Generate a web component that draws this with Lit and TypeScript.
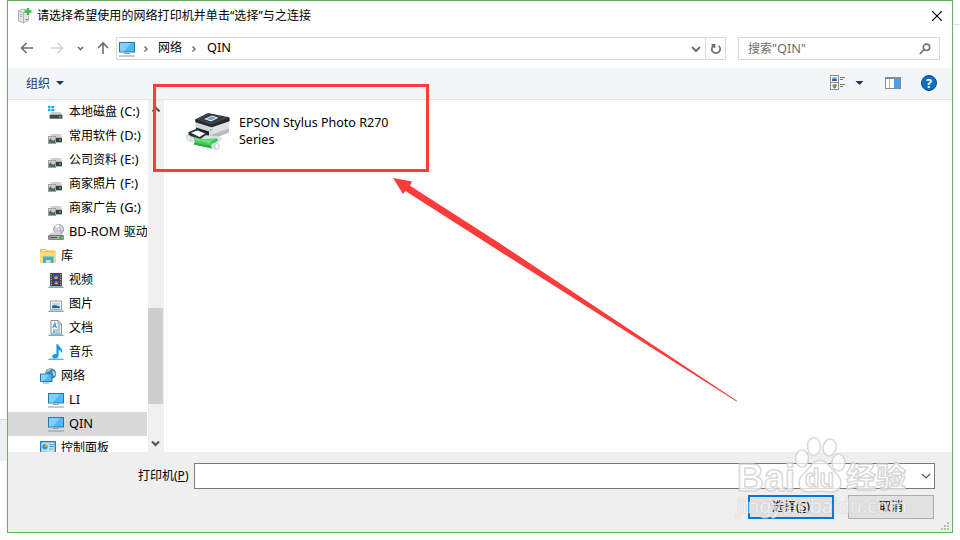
import { LitElement, html, css, svg, TemplateResult } from "lit";
import { customElement, property } from "lit/decorators.js";

const monitor = svg`
  <rect x=".5" y="1.500" width="15" height="9.500" fill="#4db8fb" stroke="#2a78a8"/>
  <path d="M1 2h11L5 10.500H1z" fill="#83cffc"/>
  <path d="M5 12.500h6" stroke="#93a9b8" /><path d="M0 15h16" stroke="#8297ad"/>`;

const drive = svg`
  <path d="M3 6h10l1 3H2z" fill="#cfd0d1"/><path d="M2 9h12v6H7V9z" fill="#b8babb"/>
  <rect x="7.5" y="10" width="6.5" height="4" fill="#3a3e3f"/><rect x="11" y="11.2" width="2" height="1.5" fill="#32d05a"/>
  <rect x=".5" y="8.5" width="7" height="7" fill="#c3d9e4" stroke="#a0a0a0"/>
  <path d="M1 15v-3l2-2 2 3 2-2v4z" fill="#456a72"/><circle cx="4" cy="10.6" r="1.3" fill="#e3b48a"/>`;

const base = svg`<path d="M1 14.5h14l1 1.5H0z" fill="#4fb9f2"/><path d="M2 14h12v.8H2z" fill="#b5e3fb"/>`;

const icons: Record<string, TemplateResult<2>> = {
  monitor,
  drive,
  system: svg`
    <path d="M0 0h2.5v2.2H0zM3.3 0h2.9v2.2H3.3zM0 3h2.5v2.3H0zM3.3 3h2.9v2.3H3.3z" transform="translate(0 2)" fill="#12aef0"/>
    <path d="M3 8h10l1.400 3H1.600z" fill="#cfd0d1"/><rect x="1.600" y="10.700" width="12.800" height="4" fill="#46494b"/>
    <rect x="11" y="12" width="2" height="1.500" fill="#36d55c"/>`,
  disc: svg`
    <circle cx="10.6" cy="5.4" r="5" fill="#cfd2da" stroke="#8f9198" stroke-width=".8"/>
    <path d="M10.6 5.4L7 2a5 5 0 0 1 4-1.5z" fill="#fff"/><path d="M10.6 5.4l4.400 1a5 5 0 0 1-2 3z" fill="#b3aad8"/>
    <circle cx="10.6" cy="5.4" r="1.5" fill="#fff" stroke="#888" stroke-width=".6"/>
    <path d="M3 8.500h5l2 1.500h4l1.500 2H.5z" fill="#d6d7d8"/><rect x=".6" y="11.400" width="14.800" height="4.200" rx=".5" fill="#a6a8a9" stroke="#5f6162" stroke-width=".8"/>
    <path d="M2 13.500h7" stroke="#555"/><rect x="11.500" y="12" width="2.600" height="3" fill="#31b92f"/>`,
  library: svg`
    <path d="M0 1.500Q0 1 .5 1H6l1.500 1.500H15.500v12H0z" fill="#efbd43"/><path d="M1.500 2h4.500v1.300H1.500z" fill="#fff1bd"/>
    <path d="M0 4.200h16v10.300H0z" fill="#fbd97c"/>
    <path d="M3 8.500h10.500V15H10.700v-3H5.800v3H3z" fill="#26b5ea"/>`,
  video: svg`${base}
    <rect x="2" y="1" width="12" height="13.300" fill="#3c3d42"/><path d="M3.300 2v12M12.700 2v12" stroke="#d3d3d3" stroke-width="1.100" stroke-dasharray="1.300 1.200"/>
    <rect x="5" y="2" width="6" height="5" fill="#3358b4"/><rect x="5" y="8" width="6" height="5" fill="#263e96"/>
    <path d="M6 6l2-2 2 1.500V7H6zM6 12l2-3 2 2v1.500z" fill="#e69a35"/><path d="M8 3h2v1.500zM9 9h1.500v2z" fill="#c63f36"/>`,
  picture: svg`${base}
    <rect x="2.500" y="5" width="11" height="8.700" fill="#fff" stroke="#9a9a9a"/><rect x="4" y="6.500" width="8" height="5.700" fill="#b5dcf3"/>
    <path d="M4 9.800l3-.8 5 1.800v1.400H4z" fill="#2f668c"/>`,
  document: svg`${base}
    <path d="M3 .6h7.200l3.200 3.200V14H3z" fill="#fff" stroke="#777" stroke-width=".9"/><path d="M10 .8V4h3.200" fill="none" stroke="#777" stroke-width=".8"/>
    <path d="M4.800 8L6.800 3l1.500 5M5.400 6.500h3" fill="none" stroke="#299bd6" stroke-width="1.100"/>
    <path d="M9.500 6h2.500M9.500 8h2.500M5 10h7M8 12h4" stroke="#4787b2" stroke-width=".9"/><rect x="5" y="11" width="2.300" height="2" fill="#3faee8"/>`,
  music: svg`${base}
    <path d="M8.400 .2h1.900c0 2.500 5.400 3.700 3.500 9.200-.3-2-1.800-3.200-3.200-3.400V11.500c0 3.600-6.400 4.100-6.400 1 0-2.100 2.300-3 4.200-2.400z" fill="#149be2"/>`,
  network: svg`
    <circle cx="10.600" cy="5.700" r="5.500" fill="#4a86a8"/><path d="M6.500 3.500Q8 .8 11 .8q-.5 2-2.500 2.500T6 6zM12.500 3q2 .3 3 2.500-.5 2-2 2.500-.5-2-1-2z" fill="#bcd9e6"/>
    <rect x=".5" y="6" width="11.500" height="7.500" fill="#4db8fb" stroke="#2a78a8"/><path d="M1 6.500h8L4 13H1z" fill="#83cffc"/><path d="M3 15h6" stroke="#8297ad"/>`,
  panel: svg`
    <rect x=".7" y="1.700" width="14.600" height="12" fill="#b9e6fb" stroke="#2387bf" stroke-width="1.400"/><circle cx="5" cy="6.700" r="2.700" fill="#2b96d8"/>
    <path d="M5 6.700V4a2.700 2.700 0 0 1 2.700 2.700z" fill="#f6a82d"/><path d="M9.500 4.500h2M12.500 4.500h1.500M9.500 6.500h4M9.500 9h1.500" stroke="#2b86bb"/><path d="M11.500 9h2" stroke="#f3a22b"/>
    <path d="M2.500 11.500h3" stroke="#f3a22b"/>`,
  server: svg`
    <path d="M1.500 3l4-2 6 1.500v10L6.500 15l-5-2z" fill="#e4e5e4" stroke="#a0a2a1" stroke-width=".8"/><path d="M6.500 4.500V15M1.500 3l5 1.500 5-2" fill="none" stroke="#a6a8a7" stroke-width=".8"/>
    <path d="M2.700 6l2.500.8M2.700 8l2.500.8" stroke="#9b9b9b" stroke-width=".8"/><path d="M8.500 11.500h2" stroke="#777"/>
    <path d="M9.800 0h2.400v2.300h2.300v2.400h-2.300V7H9.800V4.700H7.500V2.300h2.300z" fill="#3fbd4a"/>`,
};

@customElement("ui-icon")
class UiIcon extends LitElement {
  static styles = css`
    :host { display: block; width: 16px; height: 16px; flex: none; }
    svg { display: block; }
  `;
  @property() name = "monitor";
  render() {
    return html`<svg width="16" height="16" viewBox="0 0 16 16">${icons[this.name]}</svg>`;
  }
}

interface TreeItem { icon: string; cjk?: string; latin?: string; level: number; selected?: boolean; latinFirst?: boolean; }
const items: TreeItem[] = [
  { icon: "system", cjk: "本地磁盘", latin: " (C:)", level: 2 },
  { icon: "drive", cjk: "常用软件", latin: " (D:)", level: 2 },
  { icon: "drive", cjk: "公司资料", latin: " (E:)", level: 2 },
  { icon: "drive", cjk: "商家照片", latin: " (F:)", level: 2 },
  { icon: "drive", cjk: "商家广告", latin: " (G:)", level: 2 },
  { icon: "disc", cjk: "驱动器", latin: "BD-ROM ", level: 2, latinFirst: true },
  { icon: "library", cjk: "库", level: 1 },
  { icon: "video", cjk: "视频", level: 2 },
  { icon: "picture", cjk: "图片", level: 2 },
  { icon: "document", cjk: "文档", level: 2 },
  { icon: "music", cjk: "音乐", level: 2 },
  { icon: "network", cjk: "网络", level: 1 },
  { icon: "monitor", latin: "LI", level: 2 },
  { icon: "monitor", latin: "QIN", level: 2, selected: true },
  { icon: "panel", cjk: "控制面板", level: 1 },
];

@customElement("folder-tree")
class FolderTree extends LitElement {
  static styles = css`
    :host { display: block; width: 139px; height: 352px; overflow: hidden; }
    .row { display: flex; align-items: center; height: 24px; gap: 5px; padding-left: 40px; white-space: pre; color: #000; }
    .top { padding-left: 32px; }
    .selected { background: #d9d9d9; }
    .latin { font-size: 12.8px; line-height: 0; }
    .label { line-height: 24px; height: 24px; }
  `;
  render() {
    return items.map((n) => {
      const latin = html`<span class="latin">${n.latin}</span>`;
      return html`<div class="row ${n.level === 1 ? "top" : ""} ${n.selected ? "selected" : ""}">
        <ui-icon name=${n.icon}></ui-icon><span class="label">${n.latinFirst ? latin : ""}${n.cjk ?? ""}${n.latin && !n.latinFirst ? latin : ""}</span></div>`;
    });
  }
}

@customElement("app-root")
class AppRoot extends LitElement {
  static styles = css`
    :host { display: block; position: relative; width: 960px; height: 540px; overflow: hidden; background: #fff;
      font: 12px/16px "Noto Sans", "Noto Sans CJK SC", sans-serif; color: #000; }
    * { box-sizing: border-box; }
    svg { display: block; flex: none; }
    .page { display: grid; grid-template-columns: 7px 946px 7px; height: 540px; }
    .left { margin-top: 419px; height: 42px; background: #efefef; border-top: 1px solid #dcdcdc; }
    .right { margin-top: 24px; height: 1px; background: #e3e3e3; }
    .window { height: 533px; border: 1px solid #62b562; display: flex; flex-direction: column; background: #fff; }
    .title { height: 30px; display: flex; align-items: center; padding: 0 10px 0 9px; }
    .title span { margin-left: 4px; flex: 1; letter-spacing: .06px; }
    .nav { height: 37px; display: flex; align-items: flex-start; padding: 6px 12px 0 11px; }
    .arrows { width: 97px; height: 23px; }
    .address { display: flex; align-items: center; width: 610px; height: 23px; border: 1px solid #d9d9d9; padding-left: 2px; }
    .crumb { line-height: 20px; height: 21px; }
    .latin { font-size: 12.8px; line-height: 0; }
    .chev { margin: 0 9px 0 8px; }
    .next { margin: 0 10px 0 9px; }
    .refresh { display: flex; align-items: center; justify-content: center; width: 20px; height: 21px; border-left: 1px solid #d9d9d9; }
    .grow { flex: 1; }
    .search { display: flex; align-items: center; justify-content: space-between; margin-left: 12px; width: 202px; height: 23px; border: 1px solid #d9d9d9; padding: 0 8px 0 9px; color: #6d6d6d; }
    .toolbar { height: 32px; display: flex; align-items: center; background: #f4f5f7; border-bottom: 1px solid #e4e7ea; padding: 0 15px 1px 18px; color: #1e395b; }
    .organize { padding-top: 2px; }
    .caret { width: 0; margin-left: 6px; border: 4px solid transparent; border-top-color: #1b365d; border-bottom: 0; }
    .views { margin-right: 7px; }
    .main { display: flex; height: 352px; }
    .scroll { display: flex; flex-direction: column; align-items: center; margin-left: 1px; width: 16px; height: 352px; background: #f0f0f0; padding: 6px 0 4px; }
    .thumb { width: 15px; height: 96px; background: #cdcdcd; margin: 194px 1px 36px 0; }
    .files { flex: 1; margin-left: 2px; border-left: 1px solid #f7f7f7; padding: 13px 0 0 19px; display: flex; }
    .file { margin: 1px 0 0 7px; font-size: 12.5px; line-height: 17px; letter-spacing: .01px; width: 160px; white-space: nowrap; }
    .footer { flex: 1; background: #efefef; padding: 11px 17px 0 130px; }
    .field { display: flex; align-items: center; justify-content: space-between; }
    .combo { display: flex; align-items: center; justify-content: flex-end; width: 741px; height: 26px; border: 1px solid #7a7a7a; background: #fff; padding-right: 3px; }
    .buttons { display: flex; justify-content: flex-end; gap: 14px; margin: 6px 1px 0 0; }
    .btn { width: 86px; height: 24px; display: flex; align-items: center; justify-content: center; border: 1px solid #adadad; background: #e1e1e1; }
    .primary { border: 2px solid #0078d7; }
    .overlay { position: absolute; left: 0; top: 0; }
    .bold { font-family: "Liberation Sans", "Noto Sans CJK SC", sans-serif; font-weight: 700; }
    .url { font-family: "Noto Sans", sans-serif; font-size: 20px; }
  `;

  chevron(cls = "") {
    return html`<svg class="chev ${cls}" width="6" height="8" viewBox="0 0 6 8"><path d="M1.500 1.500L4 4 1.500 6.500" fill="none" stroke="#757575" stroke-width="1.500"/></svg>`;
  }

  printer() {
    return html`<svg width="46" height="40" viewBox="0 0 46 40">
      <path d="M9.500 7L25 12.500V25L9.500 21z" fill="#d5d8da"/>
      <path d="M24.500 12.500L43 7v12.500L24.500 27z" fill="#b9bcbf"/><path d="M24.500 13.500L43 8v7.500l-18.500 6.500z" fill="#dfe1e4"/>
      <path d="M9 6.500L21 .5q1-.4 2-.2l20 4q1 .4 .5 4L26 14.300l-1.500-.2L9.500 9.200z" fill="#25292c"/>
      <path d="M10 6.300L21 1l21 3.800L25.500 11.500z" fill="#464b4f"/><path d="M13 6.200l9-4.400L38 5l-12 5z" fill="#33383b"/>
      <path d="M18 5.900l8-3.400 6.500 2.200-7.500 3.800z" fill="#dff1fb"/><path d="M20.500 5.800l5.500-2.300 4 1.300-5 2.500z" fill="#5aa6e2"/>
      <path d="M10 14.500l13 4v6l-13-4z" fill="#1f2325"/>
      <path d="M0 22q1-2 4-1.500l29 3q4 0 3 3l-3 3-27 0Q1 29 0 22z" fill="#dfe3e3"/>
      <path d="M2.500 19L10 16l12 4.500-7.500 5.500-12-3.500z" fill="#303537"/><path d="M5 19.800l6.500-2.300 7.500 3-5.500 3.500z" fill="#fdfdfd"/>
      <path d="M7 23.500q3 2 8 2.500l16-.5q2 1.300-.5 3.300-4 2.200-4.500 6.500L8 31.500q2-3-1-8z" fill="#3fcb57"/><path d="M8 24.500q4 2 8 2l13-.3q-4 1.500-5 4.500Q16 28 9 27.500z" fill="#6be07d"/><path d="M8 29.500l18 4v2L8 31.500z" fill="#27aa45"/>
      <path d="M26 30.500l6-.8q2 3 1 6.300l-6 1q-3-3-1-6.500z" fill="#dde3e0"/><ellipse cx="31" cy="33.300" rx="2.200" ry="3.200" fill="#f7f8f8" stroke="#bbc3c0" stroke-width=".8"/>
      <ellipse cx="2.500" cy="25" rx="2" ry="3" fill="#eef0f0" stroke="#c3c9c8" stroke-width=".6"/>
      <circle cx="25" cy="17" r=".9" fill="#42d466"/></svg>`;
  }

  render() {
    return html`
    <div class="page"><div class="left"></div>
    <div class="window">
      <div class="title"><ui-icon name="server"></ui-icon><span>请选择希望使用的网络打印机并单击“选择”与之连接</span>
        <svg width="10" height="10" viewBox="0 0 10 10"><path d="M0 0L10 10M10 0L0 10" stroke="#000" stroke-width="1.200"/></svg></div>
      <div class="nav">
        <svg class="arrows" viewBox="0 0 97 23" fill="none" stroke="#6d6d6d" stroke-width="1.600">
          <path d="M2.500 11H14M7.500 6L2.500 11l5 5"/><path d="M32 11H43.500M38.500 6l5 5-5 5" stroke="#d4d4d4"/>
          <path d="M59 10l2.500 2.500 2.500-2.500"/><path d="M84 17V6M79 11l5-5 5 5"/></svg>
        <div class="address"><ui-icon name="monitor"></ui-icon>${this.chevron()}<span class="crumb">网络</span>${this.chevron("next")}<span class="crumb"><span class="latin">QIN</span></span>
          <span class="grow"></span>
          <svg width="20" height="10" viewBox="0 0 20 10"><path d="M7 3l4 4 4-4" fill="none" stroke="#707070" stroke-width="2"/></svg>
          <div class="refresh"><svg width="12" height="12" viewBox="0 0 12 12" fill="none" stroke="#707070" stroke-width="1.700"><path d="M3.500 2.600A4.200 4.200 0 1 0 8.700 2.800M1.500 1.800h3V5"/></svg></div></div>
        <div class="search"><span>搜索"<span class="latin">QIN</span>"</span>
          <svg width="12" height="12" viewBox="0 0 12 12" fill="none" stroke="#707070" stroke-width="1.600"><circle cx="7.500" cy="4.300" r="3.200"/><path d="M5 6.800L.8 11"/></svg></div>
      </div>
      <div class="toolbar"><span class="organize">组织</span><span class="caret"></span><span class="grow"></span>
        <svg class="views" width="84" height="18" viewBox="0 0 84 18">
          <rect x=".5" y="1.500" width="8" height="14" fill="#fff" stroke="#8b8b8b"/><path d="M0 8.500h9" stroke="#8b8b8b"/>
          <rect x="2" y="3" width="5" height="4" fill="#8cc7ec"/><path d="M2 5.500l2-1 3 1V7H2z" fill="#2b5c96"/>
          <circle cx="3.500" cy="11.500" r="1.300" fill="#e0753b"/><circle cx="5.500" cy="11.500" r="1.400" fill="#52a946"/><circle cx="4.500" cy="13.200" r="1.200" fill="#3d81c4"/>
          <path d="M10 3.500h5M10 5.500h3M10 10.500h5M10 12.500h3" stroke="#777"/>
          <path d="M25.500 7H33.500l-4 4z" fill="#1b365d"/>
          <rect x="55.500" y="3.500" width="15" height="11" fill="#fff" stroke="#858c92"/><path d="M55 4.500h16" stroke="#858c92"/><path d="M59.500 5v9" stroke="#b7babd"/>
          <rect x="64" y="5" width="6" height="9" fill="#4ba0e8"/></svg>
        <svg width="16" height="18" viewBox="0 0 16 18"><circle cx="8" cy="9" r="7.500" fill="#0a6fcb" stroke="#11497f"/>
          <text x="8" y="13.500" text-anchor="middle" fill="#fff" font-family="Noto Sans" font-size="12.500" font-weight="700">?</text></svg>
      </div>
      <div class="main"><folder-tree></folder-tree>
        <div class="scroll">
          <svg width="10" height="8" viewBox="0 0 10 8"><path d="M1.500 5.500L5 2l3.500 3.500" fill="none" stroke="#505050" stroke-width="2"/></svg>
          <div class="thumb"></div>
          <svg width="10" height="8" viewBox="0 0 10 8"><path d="M1 1.500L4.500 5 8 1.500" fill="none" stroke="#505050" stroke-width="2"/></svg></div>
        <div class="files">${this.printer()}<div class="file">EPSON Stylus Photo R270<br>Series</div></div></div>
      <div class="footer">
        <div class="field"><span>打印机(<u>P</u>)</span><div class="combo"><svg width="10" height="8" viewBox="0 0 10 8"><path d="M1 2l4 4 4-4" fill="none" stroke="#555" stroke-width="1.200"/></svg></div></div>
        <div class="buttons"><div class="btn primary"><span>选择(<u>S</u>)</span></div><div class="btn">取消</div></div>
      </div>
    </div><div class="right"></div></div>
    <svg class="overlay" width="960" height="540" viewBox="0 0 960 540">
      <path d="M947 522h2v2h-2zM944 525h2v2h-2zM947 525h2v2h-2zM941 528h2v2h-2zM944 528h2v2h-2zM947 528h2v2h-2z" fill="#bcbcbc"/>
      <rect x="154.500" y="85.500" width="273" height="85" fill="none" stroke="#fc3b3a" stroke-width="3"/>
      <path d="M393 178l19 3.500-2 4.200L500 243.500 737 400.800 736.500 401.500 500 251.500 405.500 191l-2.500 3z" fill="#fc3b3a"/>
      <g fill="#fff" fill-opacity=".72" stroke="#cfcfcf" stroke-opacity=".8" stroke-width="1.600" stroke-linejoin="round">
        <text class="bold" x="737" y="490.500" font-size="39" textLength="58" lengthAdjust="spacingAndGlyphs">Bai</text>
        <ellipse cx="802" cy="458.500" rx="6.500" ry="8.500"/><ellipse cx="814" cy="446.500" rx="6.500" ry="9"/><ellipse cx="829.500" cy="447.500" rx="6.500" ry="8.500" transform="rotate(12 829.500 447.500)"/><ellipse cx="838.500" cy="462.500" rx="6.500" ry="8.500"/>
        <path d="M820 460.500c8 0 10 7 16 13 9 8 5 18.500-5 18.500-5 0-7-1-11-1s-6 1-11 1c-10 0-14-10.500-5-18.500 6-6 8-13 16-13z"/>
        <text class="bold" x="805" y="487" font-size="25" textLength="29" lengthAdjust="spacingAndGlyphs">du</text>
        <text class="bold" x="846" y="488" font-size="29" textLength="60" lengthAdjust="spacingAndGlyphs">经验</text>
      </g>
      <text class="url" x="737" y="512.500" fill="#fff" fill-opacity=".6" stroke="#c4c4c4" stroke-width="1.600" stroke-opacity=".45" paint-order="stroke" textLength="170" lengthAdjust="spacingAndGlyphs">jingyan.baidu.com</text>
    </svg>`;
  }
}
